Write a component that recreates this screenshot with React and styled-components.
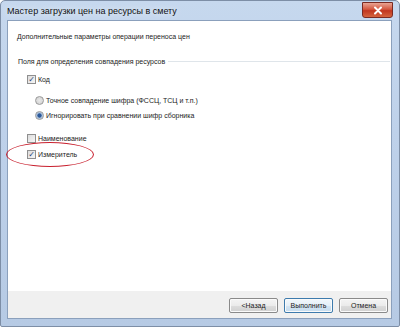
import styled, { createGlobalStyle } from 'styled-components';

const GlobalStyle = createGlobalStyle`
  html, body {
    margin: 0;
    padding: 0;
    width: 400px;
    height: 327px;
    overflow: hidden;
    background: #fff;
  }
`;

export default function App() {
  return (
    <>
      <GlobalStyle />
      <Window>
        <TitleBar>
          <Title>Мастер загрузки цен на ресурсы в смету</Title>
          <CloseButton>
            <svg width="10" height="9" viewBox="0 0 10 9">
              <path d="M2 1.5 L8 7.5 M8 1.5 L2 7.5" stroke="#fff" strokeWidth="2" strokeLinecap="round" />
            </svg>
          </CloseButton>
        </TitleBar>

        <Client>
          <Header>Дополнительные параметры операции переноса цен</Header>

          <Body>
            <GroupTitle>
              <span>Поля для определения совпадения ресурсов</span>
              <Rule />
            </GroupTitle>

            <Option $indent={19} $top={10}>
              <CheckBox $checked>✓</CheckBox>
              Код
            </Option>
            <Option $indent={27} $top={12}>
              <Radio />
              Точное совпадение шифра (ФССЦ, ТСЦ и т.п.)
            </Option>
            <Option $indent={27} $top={6}>
              <Radio $selected />
              Игнорировать при сравнении шифр сборника
            </Option>
            <Option $indent={19} $top={14}>
              <CheckBox />
              Наименование
            </Option>
            <Option $indent={19} $top={7}>
              <Highlight />
              <CheckBox $checked>✓</CheckBox>
              Измеритель
            </Option>
          </Body>

          <Footer>
            <Button>&lt;Назад</Button>
            <Button $default>Выполнить</Button>
            <Button>Отмена</Button>
          </Footer>
        </Client>
      </Window>
    </>
  );
}

const Window = styled.div`
  width: 400px;
  height: 327px;
  box-sizing: border-box;
  display: flex;
  flex-direction: column;
  padding: 0 7px 7px 6px;
  background: linear-gradient(180deg, #c6d8ee 0%, #bed1ea 40%, #b6cae4 100%);
  border: 1px solid #7d8ea6;
  border-radius: 5px 5px 2px 2px;
  font-family: 'Liberation Sans', 'DejaVu Sans', sans-serif;
  color: #1b1b1b;
`;

const TitleBar = styled.div`
  height: 19px;
  flex-shrink: 0;
  display: flex;
  align-items: flex-start;
  justify-content: space-between;
`;

const Title = styled.div`
  margin-top: 5px;
  font-size: 9px;
  color: #111;
  text-shadow: 0 0 6px #f2f6fb;
`;

const CloseButton = styled.div`
  width: 29px;
  height: 14px;
  margin-top: 1px;
  margin-right: -1px;
  display: flex;
  align-items: center;
  justify-content: center;
  border: 1px solid #7a2a22;
  border-radius: 0 0 3px 3px;
  background: linear-gradient(180deg, #e9a493 0%, #d4573f 45%, #c1361f 55%, #d5643e 100%);
`;

const Client = styled.div`
  flex: 1;
  display: flex;
  flex-direction: column;
  background: #fff;
  border: 1px solid #8ba0bc;
`;

const Header = styled.div`
  padding: 12px 0 0 9px;
  height: 21px;
  font-size: 7px;
`;

const Body = styled.div`
  flex: 1;
  display: flex;
  flex-direction: column;
  padding: 4px 1px 0 10px;
`;

const GroupTitle = styled.div`
  display: flex;
  align-items: center;
  gap: 3px;
  font-size: 7px;
`;

const Rule = styled.div`
  flex: 1;
  height: 1px;
  background: #dfe5ea;
`;

const Option = styled.div`
  position: relative;
  display: flex;
  align-items: center;
  gap: 2px;
  margin-top: ${p => p.$top}px;
  padding-left: ${p => p.$indent - 10}px;
  font-size: 7px;
  line-height: 9px;
`;

const CheckBox = styled.span`
  width: 7px;
  height: 7px;
  display: inline-flex;
  align-items: center;
  justify-content: center;
  border: 1px solid #8f8f8f;
  background: linear-gradient(135deg, #dcdcdc 0%, #f6f6f6 100%);
  color: #2a3f7a;
  font-size: 8px;
  font-weight: bold;
  line-height: 1;
`;

const Radio = styled.span`
  width: 7px;
  height: 7px;
  border-radius: 50%;
  border: 1px solid #9a9a9a;
  background: ${p =>
    p.$selected
      ? 'radial-gradient(circle, #2d5a9a 0 1.8px, #9db6d6 2.4px, #e8eef5 100%)'
      : 'radial-gradient(circle, #e8e8e8 0%, #cfcfcf 100%)'};
`;

const Highlight = styled.span`
  position: absolute;
  left: -12px;
  top: -8px;
  width: 86px;
  height: 23px;
  border: 1.5px solid #c8202e;
  border-radius: 50%;
  pointer-events: none;
`;

const Footer = styled.div`
  height: 26px;
  flex-shrink: 0;
  display: flex;
  align-items: center;
  justify-content: flex-end;
  gap: 6px;
  padding: 1px 3px 0 0;
  background: #f0f0f0;
`;

const Button = styled.div`
  width: 47px;
  height: 13px;
  display: flex;
  align-items: center;
  justify-content: center;
  font-size: 7px;
  border: 1px solid ${p => (p.$default ? '#3d7bad' : '#8a8a8a')};
  border-radius: 2px;
  background: ${p =>
    p.$default
      ? 'linear-gradient(180deg, #f2f8fc 0%, #e4eff8 50%, #d3e5f3 51%, #c6dcee 100%)'
      : 'linear-gradient(180deg, #f4f4f4 0%, #ebebeb 50%, #dddddd 51%, #d0d0d0 100%)'};
  box-shadow: inset 0 0 0 1px #fafafa;
`;
